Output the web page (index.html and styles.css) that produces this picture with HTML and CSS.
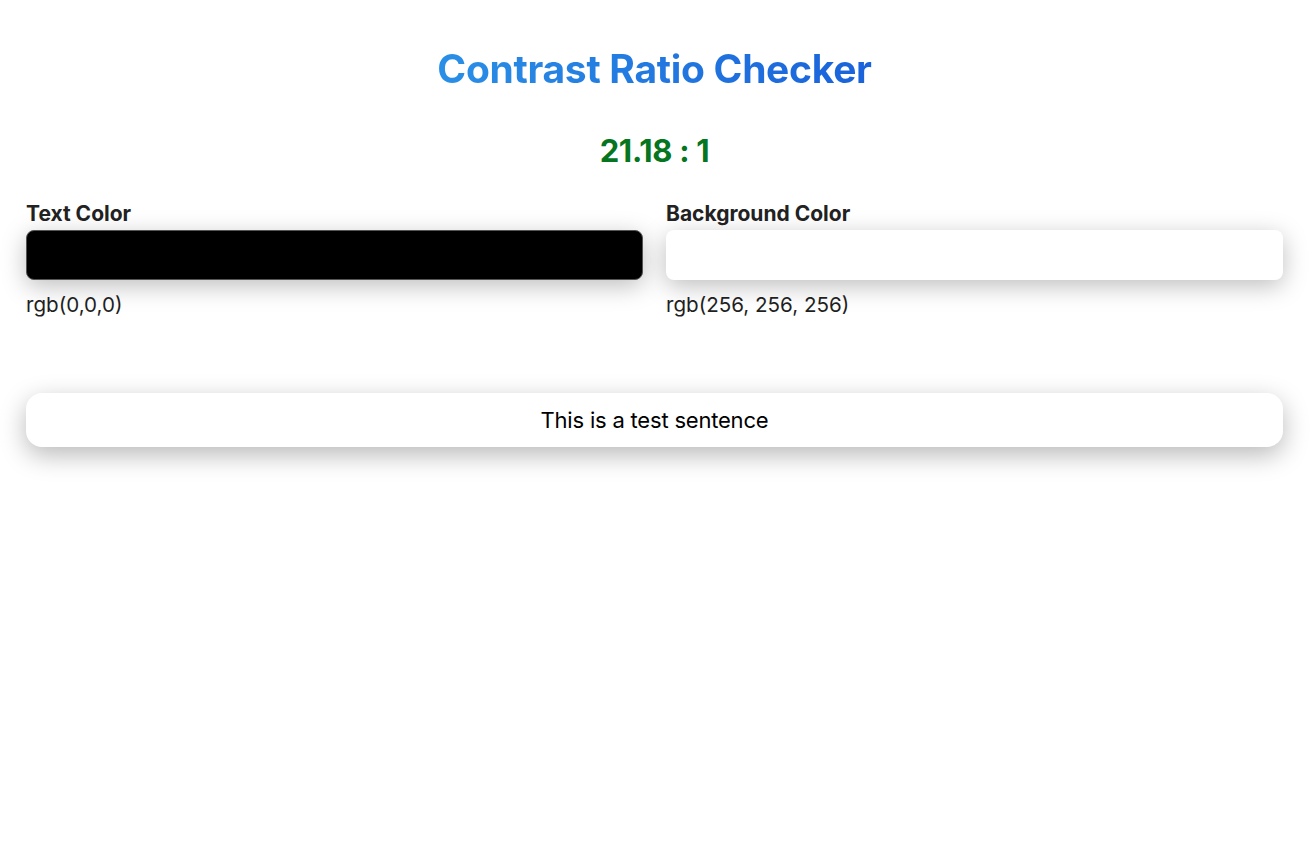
FILE: index.html
```html
<!DOCTYPE html>
<html>
<head>
<meta charset="utf-8">
<link rel="stylesheet" href="styles.css">
</head>
<body>
<main class="page">
  <h1 class="title">Contrast Ratio Checker</h1>
  <div class="ratio">21.18 : 1</div>
  <div class="pickers">
    <div class="picker">
      <label class="label">Text Color</label>
      <div class="swatch swatch-black"></div>
      <div class="value">rgb(0,0,0)</div>
    </div>
    <div class="picker">
      <label class="label">Background Color</label>
      <div class="swatch swatch-white"></div>
      <div class="value">rgb(256, 256, 256)</div>
    </div>
  </div>
  <div class="preview">This is a test sentence</div>
</main>
</body>
</html>
```
FILE: styles.css
```css
html, body {
  margin: 0;
  padding: 0;
  background: #fff;
}
html {
  min-height: 100%;
}
body {
  font-family: Inter, "Liberation Sans", sans-serif;
  color: #1f1f1f;
  min-height: 100vh;
}
.page {
  padding: 44px 31px 60px 26px;
}
.title {
  font-size: 39px;
  line-height: 50px;
  font-weight: 700;
  letter-spacing: -0.3px;
  background: linear-gradient(90deg, #2a8fe6 0%, #1a62da 100%);
  -webkit-background-clip: text;
  background-clip: text;
  color: transparent;
  display: block;
  width: fit-content;
  margin: 0 auto;
}
.ratio {
  margin-top: 37px;
  text-align: center;
  font-size: 31px;
  line-height: 40px;
  font-weight: 700;
  color: #057520;
  letter-spacing: -0.3px;
}
.pickers {
  margin-top: 30px;
  display: grid;
  grid-template-columns: 1fr 1fr;
  gap: 23px;
}
.picker {
  display: flex;
  flex-direction: column;
}
.label {
  font-size: 21px;
  line-height: 26px;
  font-weight: 700;
  color: #222;
  margin-bottom: 3px;
}
.swatch {
  height: 50px;
  border-radius: 8px;
  box-shadow: 0 6px 24px rgba(0, 0, 0, 0.26);
  box-sizing: border-box;
}
.swatch-black {
  background: #000;
  border: 1px solid #555;
}
.swatch-white {
  background: #fff;
}
.value {
  margin-top: 12px;
  font-size: 20.6px;
  line-height: 26px;
  color: #1f1f1f;
}
.preview {
  margin-top: 75px;
  height: 54px;
  border-radius: 16px;
  background: #fff;
  box-shadow: 0 8px 26px rgba(0, 0, 0, 0.28);
  display: flex;
  align-items: center;
  justify-content: center;
  font-size: 22px;
  color: #000;
  letter-spacing: -0.2px;
}
```
